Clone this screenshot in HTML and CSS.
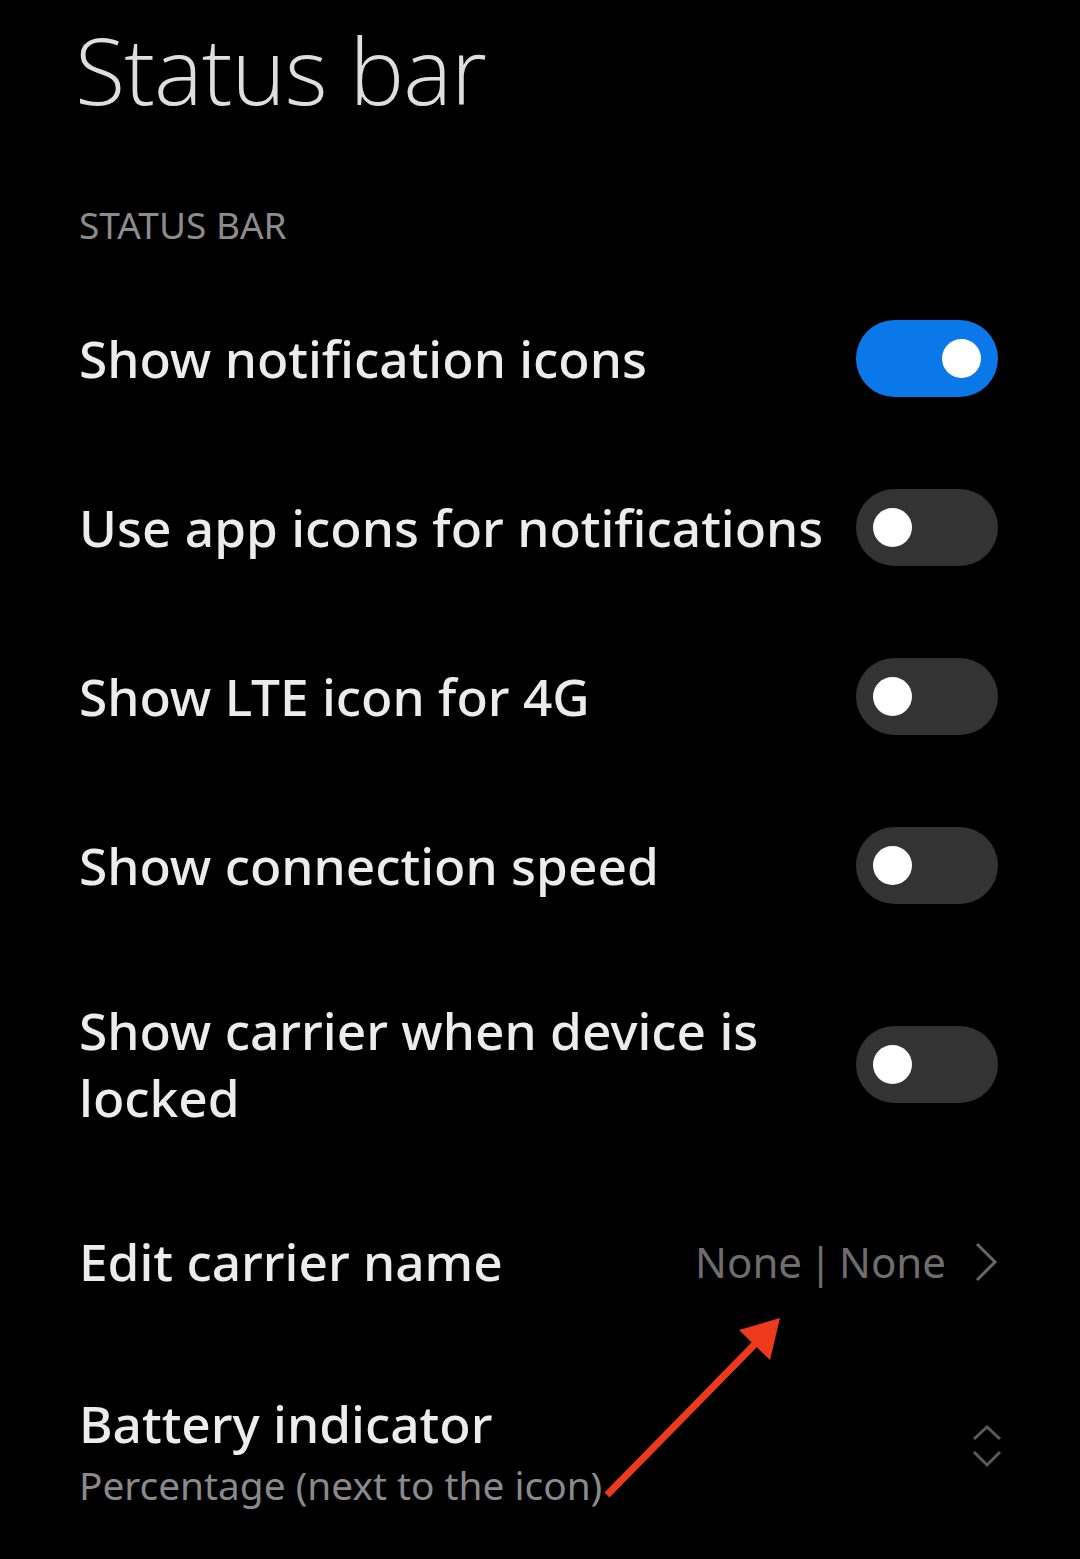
FILE: index.html
```html
<!DOCTYPE html>
<html lang="en">
<head>
<meta charset="utf-8">
<title>Status bar</title>
<link rel="stylesheet" href="styles.css">
</head>
<body>
<div class="page">
  <h1 class="title">Status bar</h1>
  <div class="section">STATUS BAR</div>
  <ul class="list">
    <li class="row">
      <span class="label">Show notification icons</span>
      <span class="switch on"><span class="knob"></span></span>
    </li>
    <li class="row">
      <span class="label">Use app icons for notifications</span>
      <span class="switch"><span class="knob"></span></span>
    </li>
    <li class="row">
      <span class="label">Show LTE icon for 4G</span>
      <span class="switch"><span class="knob"></span></span>
    </li>
    <li class="row">
      <span class="label">Show connection speed</span>
      <span class="switch"><span class="knob"></span></span>
    </li>
    <li class="row row-two">
      <span class="label">Show carrier when device is locked</span>
      <span class="switch"><span class="knob"></span></span>
    </li>
    <li class="row row-link">
      <span class="label">Edit carrier name</span>
      <span class="value">None | None
        <svg class="chev" width="24" height="40" viewBox="0 0 24 40"><polyline points="3,2 21,20 3,38" fill="none" stroke="#666" stroke-width="3" stroke-linejoin="miter"/></svg>
      </span>
    </li>
    <li class="row row-battery">
      <span class="text">
        <span class="label">Battery indicator</span>
        <span class="sub">Percentage (next to the icon)</span>
      </span>
      <svg class="updown" width="30" height="44" viewBox="0 0 30 44"><polyline points="2,14 15,2 28,14" fill="none" stroke="#5a5a5a" stroke-width="3"/><polyline points="2,27 15,40 28,27" fill="none" stroke="#5a5a5a" stroke-width="3"/></svg>
    </li>
  </ul>
  <svg class="arrow" width="1080" height="1559" viewBox="0 0 1080 1559">
    <line x1="607" y1="1495" x2="757" y2="1342" stroke="#ee3a1c" stroke-width="7" stroke-linecap="butt"/>
    <polygon points="780,1318 739,1330 770,1360" fill="#ee3a1c"/>
  </svg>
</div>
</body>
</html>
```
FILE: styles.css
```css
html, body {
  margin: 0;
  padding: 0;
  background: #000;
}
body {
  font-family: "Noto Sans", "Open Sans", sans-serif;
  color: #e8e8e8;
}
.page {
  position: relative;
  width: 1080px;
  height: 1559px;
  overflow: hidden;
  padding: 0 82px 0 79px;
  box-sizing: border-box;
}
.title {
  margin: 0;
  padding-top: 10px;
  margin-left: -4px;
  font-family: "Open Sans", sans-serif;
  font-weight: 300;
  font-size: 92px;
  line-height: 120px;
  color: #dedede;
  letter-spacing: -1px;
}
.section {
  margin-top: 70px;
  font-size: 37px;
  line-height: 50px;
  color: #8c8c8c;
  font-weight: 400;
}
.list {
  list-style: none;
  margin: 0;
  margin-top: 24px;
  padding: 0;
}
.row {
  display: flex;
  align-items: center;
  justify-content: space-between;
  padding: 46px 0;
}
.label {
  font-size: 51.4px;
  line-height: 67px;
  font-weight: 500;
  color: #ececec;
}
.row-two .label {
  max-width: 720px;
}
.row-two {
  padding: 47px 0 46px;
}
.switch {
  flex: none;
  width: 142px;
  height: 77px;
  border-radius: 39px;
  background: #333;
  display: flex;
  align-items: center;
  padding: 0 17px;
  box-sizing: border-box;
}
.switch .knob {
  width: 39px;
  height: 39px;
  border-radius: 50%;
  background: #fff;
}
.switch.on {
  background: #0a78e8;
  justify-content: flex-end;
}
.row-link {
  padding: 51px 0;
}
.value {
  display: flex;
  align-items: center;
  gap: 28px;
  font-size: 42px;
  line-height: 67px;
  color: #6e6e6e;
  font-weight: 400;
  word-spacing: -4px;
}
.row-battery {
  padding: 44px 0 30px;
}
.text {
  display: flex;
  flex-direction: column;
}
.sub {
  font-size: 38.8px;
  line-height: 56px;
  color: #8a8a8a;
}
.updown {
  margin-right: -4px;
  margin-bottom: 9px;
}
.arrow {
  position: absolute;
  left: 0;
  top: 0;
  pointer-events: none;
}
```
